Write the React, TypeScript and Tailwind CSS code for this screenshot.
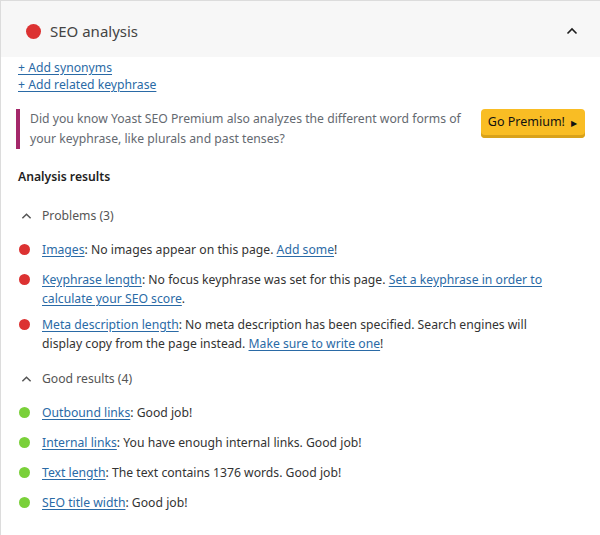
import { ReactNode } from "react";

type Result = {
  status: "bad" | "good";
  content: ReactNode;
  spacing?: string;
};

function Link({ children }: { children: ReactNode }) {
  return <a className="text-[#2a6aa6] underline underline-offset-2 cursor-pointer">{children}</a>;
}

function Dot({ status }: { status: "bad" | "good" }) {
  return (
    <span
      className={
        "mt-[4px] h-[11px] w-[11px] shrink-0 rounded-full " +
        (status === "bad" ? "bg-[#dc3232]" : "bg-[#7ad03a]")
      }
    />
  );
}

function Chevron({ className }: { className: string }) {
  return (
    <svg viewBox="0 0 12 8" className={className} fill="none">
      <path d="M1.5 6.5 6 2l4.5 4.5" stroke="currentColor" strokeWidth="1.6" />
    </svg>
  );
}

const problems: Result[] = [
  {
    status: "bad",
    spacing: "mb-[11px]",
    content: (
      <>
        <Link>Images</Link>: No images appear on this page. <Link>Add some</Link>!
      </>
    ),
  },
  {
    status: "bad",
    spacing: "mb-[7px]",
    content: (
      <>
        <Link>Keyphrase length</Link>: No focus keyphrase was set for this page.{" "}
        <Link>
          Set a keyphrase in order to
          <br />
          calculate your SEO score
        </Link>
        .
      </>
    ),
  },
  {
    status: "bad",
    content: (
      <>
        <Link>Meta description length</Link>: No meta description has been specified. Search engines will
        <br />
        display copy from the page instead. <Link>Make sure to write one</Link>!
      </>
    ),
  },
];

const goodResults: Result[] = [
  { status: "good", spacing: "mb-[11px]", content: <><Link>Outbound links</Link>: Good job!</> },
  {
    status: "good",
    spacing: "mb-[11px]",
    content: <><Link>Internal links</Link>: You have enough internal links. Good job!</>,
  },
  {
    status: "good",
    spacing: "mb-[11px]",
    content: <><Link>Text length</Link>: The text contains 1376 words. Good job!</>,
  },
  { status: "good", content: <><Link>SEO title width</Link>: Good job!</> },
];

function ResultGroup({ title, items, className }: { title: string; items: Result[]; className: string }) {
  return (
    <div className={className}>
      <div className="flex items-center text-[#555] leading-[19px]">
        <Chevron className="ml-[5px] mr-[10px] h-[8px] w-[11px] text-[#555]" />
        <span>{title}</span>
      </div>
      <ul className="mt-[15px]">
        {items.map((item, i) => (
          <li key={i} className={"flex leading-[19px] text-[#333] " + (item.spacing ?? "")}>
            <span className="flex w-[26px] shrink-0 pl-[3px]">
              <Dot status={item.status} />
            </span>
            <p>{item.content}</p>
          </li>
        ))}
      </ul>
    </div>
  );
}

export default function App() {
  return (
    <div
      className="h-[535px] w-[600px] overflow-hidden border-l border-t border-[#dcdcdc] bg-white text-[12.2px]"
      style={{ fontFamily: '"Noto Sans", "Open Sans", sans-serif' }}
    >
      <div className="flex h-[56px] items-center bg-[#f7f7f7] pl-[25px] pr-[22px] pt-[4px]">
        <span className="h-[15px] w-[15px] rounded-full bg-[#dc3232]" />
        <h2 className="ml-[9px] flex-1 text-[15px] text-[#444]">SEO analysis</h2>
        <Chevron className="h-[8px] w-[12px] text-[#1e1e1e]" />
      </div>

      <div className="pl-[15px] pr-[15px]">
        <div className="ml-[2px] mt-[2px] flex flex-col items-start leading-[17px]">
          <Link>+ Add synonyms</Link>
          <Link>+ Add related keyphrase</Link>
        </div>

        <div className="mt-[16px] flex items-start">
          <p className="h-[40px] w-[456px] border-l-4 border-[#a4286a] pl-[10px] leading-[20px] text-[#646970]">
            Did you know Yoast SEO Premium also analyzes the different word forms of
            <br />
            your keyphrase, like plurals and past tenses?
          </p>
          <button className="ml-auto flex h-[29px] items-center gap-[6px] rounded-[4px] bg-[#f9bd24] pl-[7px] pr-[8px] pb-[2px] text-[12.5px] text-[#111] shadow-[inset_0_-3px_0_#d9a21a]">
            Go Premium!
            <span className="text-[8px]">▶</span>
          </button>
        </div>

        <h3 className="ml-[2px] mt-[18px] font-semibold leading-[20px] text-[#1e1e1e]">Analysis results</h3>

        <ResultGroup title="Problems (3)" items={problems} className="mt-[19px]" />
        <ResultGroup title="Good results (4)" items={goodResults} className="mt-[16px]" />
      </div>
    </div>
  );
}
